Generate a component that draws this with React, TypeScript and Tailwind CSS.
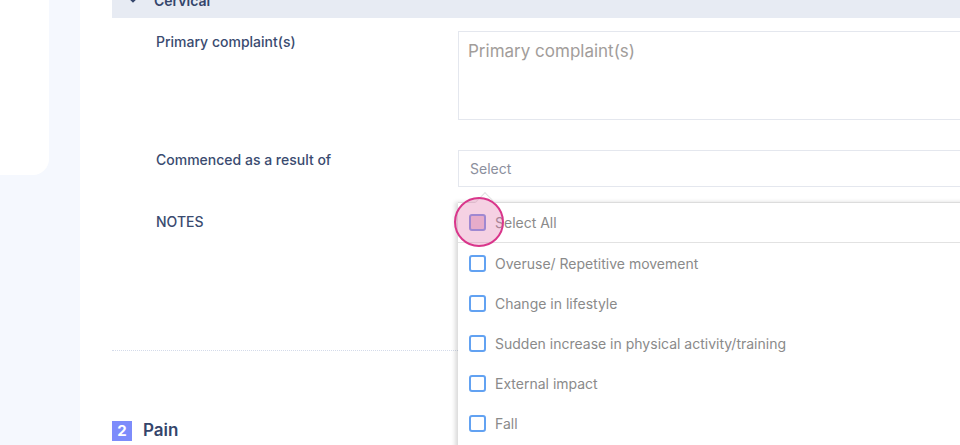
import React from 'react';

const OPTIONS = [
  'Overuse/ Repetitive movement',
  'Change in lifestyle',
  'Sudden increase in physical activity/training',
  'External impact',
  'Fall',
  'Other',
];

const font = { fontFamily: 'Inter, "Open Sans", sans-serif' };

function Checkbox({ dim }: { dim?: boolean }) {
  return (
    <span
      className={
        dim
          ? 'block h-[17px] w-[17px] shrink-0 rounded-[3px] border-2 border-[#7b8fe3] bg-[#e9c6d9]'
          : 'block h-[17px] w-[17px] shrink-0 rounded-[3px] border-2 border-[#62a2f2] bg-white'
      }
    />
  );
}

export default function App() {
  return (
    <div className="flex h-[445px] w-[960px] overflow-hidden bg-white" style={font}>
      {/* side rail */}
      <div className="w-[80px] shrink-0 bg-[#f5f8fe]">
        <div className="h-[175px] w-[49px] rounded-br-[16px] bg-white" />
      </div>

      <div className="relative flex-1 pl-[32px]">
        {/* section header */}
        <div className="h-[18px] overflow-hidden bg-[#e7ebf3]">
          <div className="-mt-[12px] flex h-[24px] items-center gap-[16px] pl-[16px] text-[14px] font-semibold text-[#34456b]">
            <svg width="10" height="10" viewBox="0 0 10 10" className="shrink-0">
              <path d="M2 3.5 L5 6.5 L8 3.5" fill="none" stroke="#34456b" strokeWidth="1.8" strokeLinecap="round" />
            </svg>
            <span>Cervical</span>
          </div>
        </div>

        {/* form rows */}
        <div className="grid grid-cols-[346px_1fr] pt-[13px] text-[14px] text-[#3a4b70]">
          <div className="pl-[44px] font-medium">Primary complaint(s)</div>
          <div className="h-[89px] w-[560px] border border-[#e4e7ee] px-[9px] pt-[7px] text-[17px] text-[#a29d9a]">
            Primary complaint(s)
          </div>

          <div className="pl-[44px] pt-[29px] font-medium">Commenced as a result of</div>
          <div className="mt-[30px] flex h-[37px] w-[560px] items-center border border-[#e4e7ee] px-[11px] text-[14px] text-[#8b8f9d]">
            Select
          </div>

          <div className="pl-[44px] pt-[24px] font-medium">NOTES</div>
          <div className="h-[130px]" />
        </div>

        <div className="mt-[33px] w-[346px] border-t border-dotted border-[#d4dbea]" />

        <div className="mt-[67px] flex items-center gap-[11px]">
          <span className="flex h-[20px] w-[20px] items-center justify-center bg-[#7d8cfb] text-[15px] font-bold text-white">
            2
          </span>
          <span className="text-[17px] font-semibold text-[#34456b]">Pain</span>
        </div>

        {/* dropdown menu */}
        <div className="absolute left-[378px] top-[202px] w-[560px] border-t border-[#dcdcdc] bg-white shadow-[-3px_0_4px_rgba(0,0,0,0.14)]">
          <div className="absolute -top-[8px] left-[20px] h-[14px] w-[14px] rotate-45 border-l border-t border-[#e2e2e2] bg-white" />
          <div className="relative flex h-[40px] items-center gap-[9px] border-b border-[#e2e2e2] pl-[11px] text-[14px] text-[#8a8a8a]">
            <Checkbox dim />
            <span>Select All</span>
          </div>
          {OPTIONS.map((o) => (
            <div key={o} className="flex h-[40px] items-center gap-[9px] pl-[11px] text-[14px] text-[#8a8a8a]">
              <Checkbox />
              <span>{o}</span>
            </div>
          ))}
        </div>

        {/* click highlight */}
        <div className="pointer-events-none absolute left-[374px] top-[197px] h-[50px] w-[50px] rounded-full border-2 border-[#d9368b] bg-[#e27ab0]/35" />
      </div>
    </div>
  );
}
